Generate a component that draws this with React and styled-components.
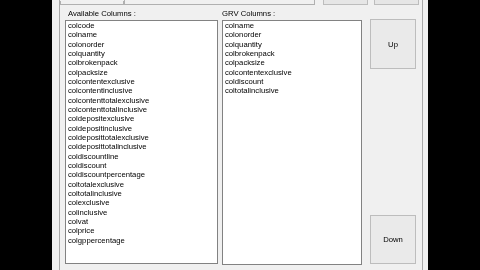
import React from 'react';
import styled, { createGlobalStyle } from 'styled-components';

const GlobalStyle = createGlobalStyle`
    html, body {
        margin: 0;
        padding: 0;
        background: #000000;
    }
`;

const Page = styled.div`
    width: 480px;
    height: 270px;
    display: flex;
    justify-content: center;
    background: #000000;
    overflow: hidden;
`;

const Window = styled.div`
    width: 376px;
    height: 270px;
    box-sizing: border-box;
    background: #f0f0f0;
    padding: 0 5px 0 7px;
    display: flex;
    font-family: "Liberation Sans", Arial, sans-serif;
    font-size: 7.7px;
    color: #000000;
    -webkit-font-smoothing: antialiased;
    will-change: transform;
`;

const Panel = styled.div`
    flex: 1;
    border-left: 1px solid #a8a8a8;
    border-right: 1px solid #a8a8a8;
    display: flex;
    flex-direction: column;
    overflow: hidden;
`;

const TopRow = styled.div`
    height: 5px;
    display: flex;
    align-items: flex-end;
`;

const TopBox = styled.div`
    width: ${(p) => p.w}px;
    margin-left: ${(p) => p.ml || 0}px;
    height: ${(p) => p.h}px;
    box-sizing: border-box;
    background: ${(p) => (p.button ? '#e6e6e6' : '#f0f0f0')};
    border: 1px solid ${(p) => (p.button ? '#bdbdbd' : '#b0b0b0')};
    border-top: none;
`;

const Body = styled.div`
    display: flex;
    padding: 4px 0 0 5px;
    height: 260px;
    box-sizing: border-box;
`;

const Column = styled.div`
    display: flex;
    flex-direction: column;
    width: ${(p) => p.w}px;
    margin-left: ${(p) => p.ml || 0}px;
`;

const Label = styled.div`
    height: 11px;
    line-height: 10px;
    padding-left: ${(p) => p.pl || 0}px;
    white-space: nowrap;
`;

const ListBox = styled.div`
    height: ${(p) => p.h}px;
    box-sizing: border-box;
    background: #ffffff;
    border: 1px solid #828282;
    padding: 0 0 0 2px;
    overflow: hidden;
`;

const Item = styled.div`
    height: 9.33px;
    line-height: 9.33px;
    white-space: nowrap;
`;

const ButtonColumn = styled.div`
    width: 46px;
    margin-left: 8px;
    display: flex;
    flex-direction: column;
    justify-content: space-between;
    padding: 10px 0 1px;
`;

const SideButton = styled.div`
    height: ${(p) => p.h}px;
    box-sizing: border-box;
    background: #eaeaea;
    border: 1px solid #bdbdbd;
    display: flex;
    align-items: center;
    justify-content: center;
`;

const BottomRow = styled.div`
    display: flex;
    padding-top: 5px;
`;

const BottomButton = styled.div`
    width: 86px;
    height: 10px;
    margin-left: 138px;
    box-sizing: border-box;
    background: #e6e6e6;
    border: 1px solid #b4b4b4;
`;

const available = [
    'colcode', 'colname', 'colonorder', 'colquantity', 'colbrokenpack', 'colpacksize',
    'colcontentexclusive', 'colcontentinclusive', 'colcontenttotalexclusive',
    'colcontenttotalinclusive', 'coldepositexclusive', 'coldepositinclusive',
    'coldeposittotalexclusive', 'coldeposittotalinclusive', 'coldiscountline',
    'coldiscount', 'coldiscountpercentage', 'coltotalexclusive', 'coltotalinclusive',
    'colexclusive', 'colinclusive', 'colvat', 'colprice', 'colgppercentage',
];

const grv = [
    'colname', 'colonorder', 'colquantity', 'colbrokenpack', 'colpacksize',
    'colcontentexclusive', 'coldiscount', 'coltotalinclusive',
];

const App = () => {
    return (
        <Page>
            <GlobalStyle />
            <Window>
                <Panel>
                    <TopRow>
                        <TopBox w={64} h={4} />
                        <TopBox w={191} h={5} />
                        <TopBox button w={45} h={5} ml={8} />
                        <TopBox button w={45} h={5} ml={6} />
                    </TopRow>
                    <Body>
                        <Column w={153}>
                            <Label pl={3}>Available Columns :</Label>
                            <ListBox h={244}>
                                {available.map((name) => <Item key={name}>{name}</Item>)}
                            </ListBox>
                        </Column>
                        <Column w={140} ml={4}>
                            <Label>GRV Columns :</Label>
                            <ListBox h={245}>
                                {grv.map((name) => <Item key={name}>{name}</Item>)}
                            </ListBox>
                        </Column>
                        <ButtonColumn>
                            <SideButton h={50}>Up</SideButton>
                            <SideButton h={49}>Down</SideButton>
                        </ButtonColumn>
                    </Body>
                    <BottomRow>
                        <BottomButton />
                    </BottomRow>
                </Panel>
            </Window>
        </Page>
    );
};

export default App;
